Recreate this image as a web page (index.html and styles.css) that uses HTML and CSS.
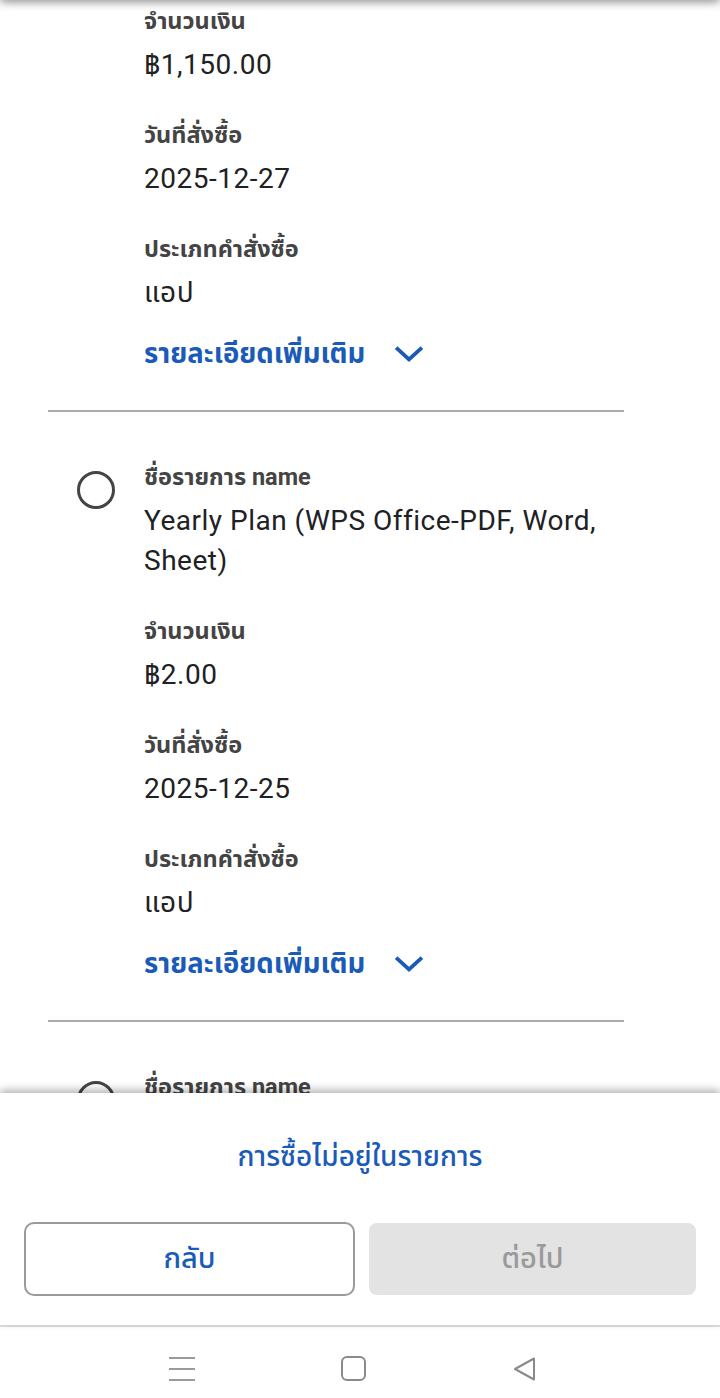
FILE: index.html
```html
<!DOCTYPE html>
<html lang="th">
<head>
<meta charset="utf-8">
<title>การซื้อ</title>
<link rel="stylesheet" href="styles.css">
</head>
<body>
<div class="screen">
  <div class="top-shadow"></div>
  <main class="list">
    <section class="item">
      <div class="radio-col"></div>
      <div class="fields">
        <div class="field">
          <div class="label">จำนวนเงิน</div>
          <div class="value">฿1,150.00</div>
        </div>
        <div class="field">
          <div class="label">วันที่สั่งซื้อ</div>
          <div class="value">2025-12-27</div>
        </div>
        <div class="field">
          <div class="label">ประเภทคำสั่งซื้อ</div>
          <div class="value">แอป</div>
        </div>
        <div class="more">รายละเอียดเพิ่มเติม
          <svg class="chev" width="30" height="18" viewBox="0 0 30 18"><path d="M3.5 4 L15 14.5 L26.5 4" fill="none" stroke="#1b5bb8" stroke-width="3.8" stroke-linecap="square"/></svg>
        </div>
      </div>
    </section>
    <section class="item">
      <div class="radio-col"><span class="radio"></span></div>
      <div class="fields">
        <div class="field">
          <div class="label">ชื่อรายการ name</div>
          <div class="value">Yearly Plan (WPS Office-PDF, Word, Sheet)</div>
        </div>
        <div class="field">
          <div class="label">จำนวนเงิน</div>
          <div class="value">฿2.00</div>
        </div>
        <div class="field">
          <div class="label">วันที่สั่งซื้อ</div>
          <div class="value">2025-12-25</div>
        </div>
        <div class="field">
          <div class="label">ประเภทคำสั่งซื้อ</div>
          <div class="value">แอป</div>
        </div>
        <div class="more">รายละเอียดเพิ่มเติม
          <svg class="chev" width="30" height="18" viewBox="0 0 30 18"><path d="M3.5 4 L15 14.5 L26.5 4" fill="none" stroke="#1b5bb8" stroke-width="3.8" stroke-linecap="square"/></svg>
        </div>
      </div>
    </section>
    <section class="item">
      <div class="radio-col"><span class="radio"></span></div>
      <div class="fields">
        <div class="field">
          <div class="label">ชื่อรายการ name</div>
        </div>
      </div>
    </section>
  </main>
  <footer class="sheet">
    <div class="not-listed">การซื้อไม่อยู่ในรายการ</div>
    <div class="buttons">
      <button class="btn btn-back">กลับ</button>
      <button class="btn btn-next" disabled>ต่อไป</button>
    </div>
  </footer>
  <nav class="navbar">
    <span class="nav-menu"><i></i><i></i><i></i></span>
    <span class="nav-home"></span>
    <svg class="nav-back" width="26" height="26" viewBox="0 0 26 26"><path d="M3 13 L22 2.5 L22 23.5 Z" fill="none" stroke="#8a8a8a" stroke-width="2" stroke-linejoin="round"/></svg>
  </nav>
</div>
</body>
</html>
```
FILE: styles.css
```css
* { box-sizing: border-box; }
html, body { margin: 0; padding: 0; background: #fff; }
body {
  font-family: Roboto, "Noto Sans Thai", "Noto Sans", "DejaVu Sans", sans-serif;
  color: #202124;
}
.screen {
  position: relative;
  width: 720px;
  height: 1398px;
  display: flex;
  flex-direction: column;
  overflow: hidden;
}
.top-shadow {
  position: absolute;
  left: 0; right: 0; top: -12px;
  height: 12px;
  box-shadow: 0 2px 10px rgba(0,0,0,0.45);
  z-index: 2;
}
.list {
  flex: 1;
  overflow: hidden;
  padding: 5px 96px 0 48px;
}
.item {
  display: flex;
  padding: 49px 0 36px;
  border-bottom: 2px solid #aaaaaa;
}
.item:first-child { padding-top: 0; }
.item:last-child { border-bottom: none; }
.radio-col { width: 96px; flex: none; }
.radio {
  display: block;
  width: 38px; height: 38px;
  margin: 10px 0 0 29px;
  border: 3.5px solid #444;
  border-radius: 50%;
}
.fields { display: flex; flex-direction: column; gap: 34px; flex: 1; }
.field { display: flex; flex-direction: column; gap: 8px; }
.label {
  font-size: 23.5px;
  line-height: 32px;
  font-weight: 700;
  color: #444;
}
.value {
  font-size: 28px;
  line-height: 40px;
  letter-spacing: 0.5px;
  color: #202124;
}
.more {
  margin-top: -13px;
  display: flex;
  align-items: center;
  gap: 29px;
  font-size: 27.5px;
  line-height: 40px;
  font-weight: 700;
  color: #1b5bb8;
}
.chev { display: block; }
.sheet {
  position: relative;
  z-index: 1;
  flex: none;
  background: #fff;
  box-shadow: 0 -3px 8px rgba(0,0,0,0.3);
  padding: 42px 24px 29px;
  display: flex;
  flex-direction: column;
  gap: 43px;
}
.not-listed {
  text-align: center;
  font-size: 28px;
  line-height: 44px;
  font-weight: 500;
  color: #1b5bb8;
}
.buttons { display: flex; gap: 14px; }
.btn {
  flex: 1;
  height: 74px;
  border-radius: 10px;
  font-family: inherit;
  font-size: 29px;
  font-weight: 500;
}
.btn-back {
  background: #fff;
  border: 2px solid #9a9a9a;
  color: #1b5bb8;
}
.btn-next {
  background: #e3e3e3;
  border: none;
  color: #9a9a9a;
  margin: 1px 0;
  height: 72px;
  border-radius: 8px;
}
.navbar {
  flex: none;
  height: 73px;
  border-top: 2px solid #e0e0e0;
  display: flex;
  align-items: flex-start;
  justify-content: space-between;
  padding: 29px 182px 0 169px;
}
.nav-menu {
  width: 26px; height: 26px;
  display: flex; flex-direction: column; justify-content: space-between;
  padding: 1px 0;
}
.nav-menu i { display: block; height: 2px; background: #9a9a9a; }
.nav-home {
  width: 25px; height: 25px;
  border: 2px solid #8a8a8a;
  border-radius: 6px;
}
.nav-back { display: block; }
```
